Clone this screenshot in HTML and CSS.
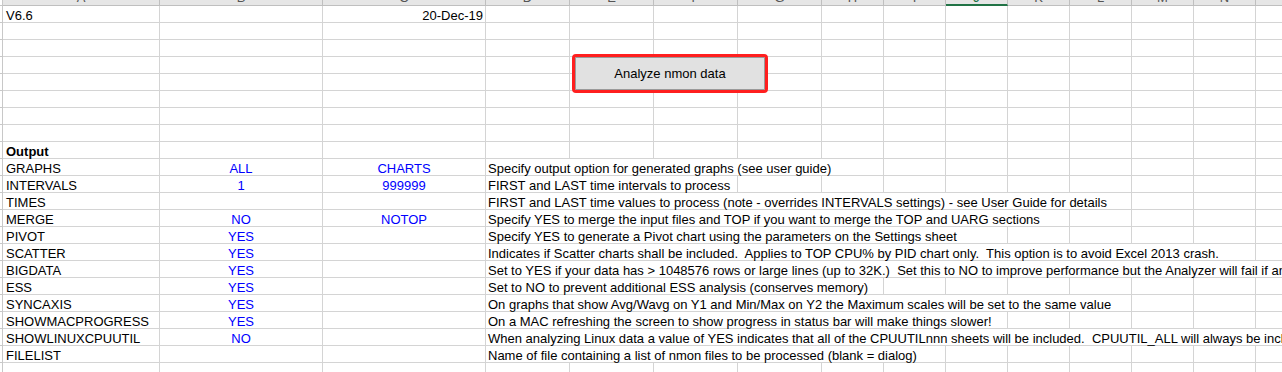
FILE: index.html
```html
<!DOCTYPE html>
<html>
<head>
<meta charset="utf-8">
<title>nmon analyser</title>
<link rel="stylesheet" href="styles.css">
</head>
<body>
<div class="sheet">
  <div class="hdr">
    <div class="rh"></div>
    <div><span>A</span></div><div><span>B</span></div><div><span>C</span></div><div><span>D</span></div>
    <div><span>E</span></div><div><span>F</span></div><div><span>G</span></div><div><span>H</span></div>
    <div><span>I</span></div><div class="sel"><span>J</span></div><div><span>K</span></div><div><span>L</span></div>
    <div><span>M</span></div><div><span>N</span></div><div><span>O</span></div>
  </div>

  <div class="row"><div class="rh"></div><div class="a">V6.6</div><div></div><div class="rt">20-Dec-19</div><div></div><div></div><div></div><div></div><div></div><div></div><div></div><div></div><div></div><div></div><div></div><div></div></div>
  <div class="row"><div class="rh"></div><div></div><div></div><div></div><div></div><div></div><div></div><div></div><div></div><div></div><div></div><div></div><div></div><div></div><div></div><div></div></div>
  <div class="row"><div class="rh"></div><div></div><div></div><div></div><div></div><div></div><div></div><div></div><div></div><div></div><div></div><div></div><div></div><div></div><div></div><div></div></div>
  <div class="row"><div class="rh"></div><div></div><div></div><div></div><div></div><div></div><div></div><div></div><div></div><div></div><div></div><div></div><div></div><div></div><div></div><div></div></div>
  <div class="row"><div class="rh"></div><div></div><div></div><div></div><div></div><div></div><div></div><div></div><div></div><div></div><div></div><div></div><div></div><div></div><div></div><div></div></div>
  <div class="row"><div class="rh"></div><div></div><div></div><div></div><div></div><div></div><div></div><div></div><div></div><div></div><div></div><div></div><div></div><div></div><div></div><div></div></div>
  <div class="row"><div class="rh"></div><div></div><div></div><div></div><div></div><div></div><div></div><div></div><div></div><div></div><div></div><div></div><div></div><div></div><div></div><div></div></div>
  <div class="row"><div class="rh"></div><div></div><div></div><div></div><div></div><div></div><div></div><div></div><div></div><div></div><div></div><div></div><div></div><div></div><div></div><div></div></div>

  <div class="row"><div class="rh"></div><div class="a b">Output</div><div></div><div></div><div></div><div></div><div></div><div></div><div></div><div></div><div></div><div></div><div></div><div></div><div></div><div></div></div>

  <div class="row"><div class="rh"></div><div class="a">GRAPHS</div><div class="v">ALL</div><div class="v">CHARTS</div><div class="d s5">Specify output option for generated graphs (see user guide)</div><div></div><div></div><div></div><div></div><div></div><div></div><div></div></div>
  <div class="row"><div class="rh"></div><div class="a">INTERVALS</div><div class="v">1</div><div class="v">999999</div><div class="d s3">FIRST and LAST time intervals to process</div><div></div><div></div><div></div><div></div><div></div><div></div><div></div><div></div><div></div></div>
  <div class="row"><div class="rh"></div><div class="a">TIMES</div><div></div><div></div><div class="d s9">FIRST and LAST time values to process (note - overrides INTERVALS settings) - see User Guide for details</div><div></div><div></div><div></div></div>
  <div class="row"><div class="rh"></div><div class="a">MERGE</div><div class="v">NO</div><div class="v">NOTOP</div><div class="d s8">Specify YES to merge the input files and TOP if you want to merge the TOP and UARG sections</div><div></div><div></div><div></div><div></div></div>
  <div class="row"><div class="rh"></div><div class="a">PIVOT</div><div class="v">YES</div><div></div><div class="d s7">Specify YES to generate a Pivot chart using the parameters on the Settings sheet</div><div></div><div></div><div></div><div></div><div></div></div>
  <div class="row"><div class="rh"></div><div class="a">SCATTER</div><div class="v">YES</div><div></div><div class="d s11">Indicates if Scatter charts shall be included.&nbsp; Applies to TOP CPU% by PID chart only.&nbsp; This option is to avoid Excel 2013 crash.</div><div></div></div>
  <div class="row"><div class="rh"></div><div class="a">BIGDATA</div><div class="v">YES</div><div></div><div class="d s12">Set to YES if your data has &gt; 1048576 rows or large lines (up to 32K.)&nbsp; Set this to NO to improve performance but the Analyzer will fail if any line is too long</div></div>
  <div class="row"><div class="rh"></div><div class="a">ESS</div><div class="v">YES</div><div></div><div class="d s5">Set to NO to prevent additional ESS analysis (conserves memory)</div><div></div><div></div><div></div><div></div><div></div><div></div><div></div></div>
  <div class="row"><div class="rh"></div><div class="a">SYNCAXIS</div><div class="v">YES</div><div></div><div class="d s9">On graphs that show Avg/Wavg on Y1 and Min/Max on Y2 the Maximum scales will be set to the same value</div><div></div><div></div><div></div></div>
  <div class="row"><div class="rh"></div><div class="a">SHOWMACPROGRESS</div><div class="v">YES</div><div></div><div class="d s7">On a MAC refreshing the screen to show progress in status bar will make things slower!</div><div></div><div></div><div></div><div></div><div></div></div>
  <div class="row"><div class="rh"></div><div class="a">SHOWLINUXCPUUTIL</div><div class="v">NO</div><div></div><div class="d s12">When analyzing Linux data a value of YES indicates that all of the CPUUTILnnn sheets will be included.&nbsp; CPUUTIL_ALL will always be included</div></div>
  <div class="row"><div class="rh"></div><div class="a">FILELIST</div><div></div><div></div><div class="d s6">Name of file containing a list of nmon files to be processed (blank = dialog)</div><div></div><div></div><div></div><div></div><div></div><div></div></div>
  <div class="row"><div class="rh"></div><div></div><div></div><div></div><div></div><div></div><div></div><div></div><div></div><div></div><div></div><div></div><div></div><div></div><div></div><div></div></div>

  <button class="run" type="button">Analyze nmon data</button>
</div>
</body>
</html>
```

FILE: styles.css
```css
html, body {
  margin: 0;
  padding: 0;
  overflow: hidden;
  background: #ffffff;
}

body {
  font-family: "Liberation Sans", Arial, sans-serif;
  font-size: 13px;
  color: #000000;
}

.sheet {
  position: relative;
  width: 1400px;
}

.hdr,
.row {
  display: grid;
  grid-template-columns: 3px 157px 163px 163px 84px 84px 84px 84px 62px 62px 62px 62px 62px 62px 62px 120px;
}

.hdr {
  height: 6px;
  overflow: hidden;
  background: #e6e6e6;
}

.hdr > div {
  box-sizing: border-box;
  height: 6px;
  border-right: 1px solid #bfbfbf;
  border-bottom: 1px solid #bfbfbf;
  text-align: center;
  overflow: hidden;
}

.hdr > div span {
  display: block;
  font-family: "Liberation Sans", Arial, sans-serif;
  font-size: 13px;
  line-height: 13px;
  margin-top: -9px;
  color: #555555;
}

.hdr > .sel {
  border-bottom: 2px solid #217346;
}

.hdr > .sel span {
  color: #217346;
}

.row {
  height: 17px;
}

.row > div {
  box-sizing: border-box;
  height: 17px;
  border-right: 1px solid #d4d4d4;
  border-bottom: 1px solid #d4d4d4;
  padding: 2px 2px 0 2px;
  line-height: 15px;
  white-space: nowrap;
  overflow: visible;
}

.row > .rh,
.hdr > .rh {
  padding: 0;
  border-right: 1px solid #c8c8c8;
  border-bottom-color: #c8c8c8;
  background: #ffffff;
}

.row > .a {
  padding-left: 3px;
}

.row > .b {
  font-weight: bold;
}

.row > .v {
  text-align: center;
  color: #0000ff;
}

.row > .rt {
  text-align: right;
}

.row > .d {
  overflow: visible;
}

.s3 { grid-column: span 3; }
.s5 { grid-column: span 5; }
.s6 { grid-column: span 6; }
.s7 { grid-column: span 7; }
.s8 { grid-column: span 8; }
.s9 { grid-column: span 9; }
.s11 { grid-column: span 11; }
.s12 { grid-column: span 12; }

.run {
  position: absolute;
  left: 572px;
  top: 54px;
  width: 196px;
  height: 39px;
  box-sizing: border-box;
  margin: 0;
  padding: 0;
  border: 3px solid #ff1f1f;
  border-radius: 4px;
  background: #e1e1e1;
  box-shadow: inset 0 0 0 1px #9a9a9a;
  font-family: "Liberation Sans", Arial, sans-serif;
  font-size: 13px;
  color: #000000;
  text-align: center;
}
```
